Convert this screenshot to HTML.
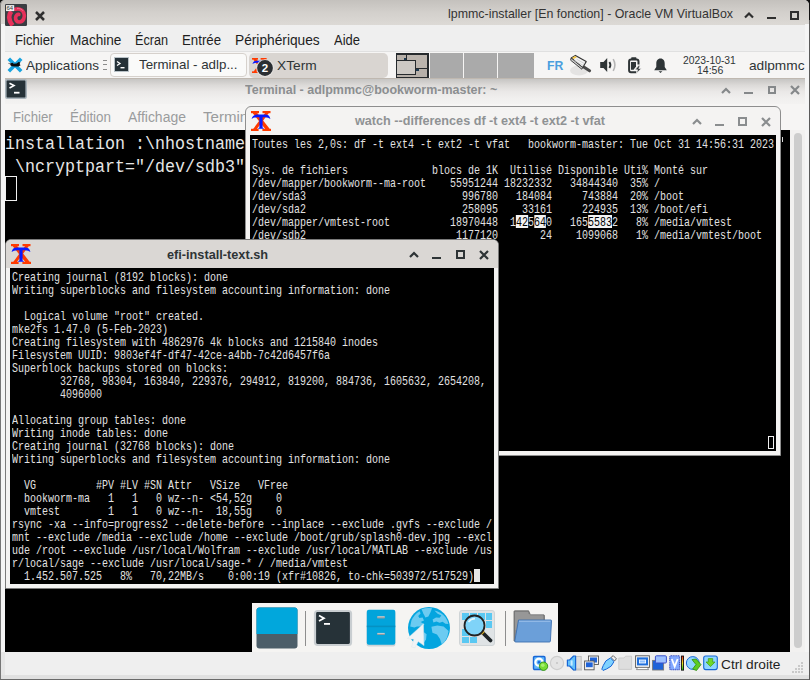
<!DOCTYPE html>
<html><head><meta charset="utf-8">
<style>
*{margin:0;padding:0;box-sizing:border-box}
html,body{width:810px;height:680px;overflow:hidden;background:#000}
body{position:relative;font-family:"Liberation Sans",sans-serif}
.a{position:absolute}
.t{position:absolute;white-space:pre;line-height:1}
.xt{position:absolute;white-space:pre;font-family:"Liberation Mono",monospace;font-size:13px;line-height:13px;color:#e2e2e2;transform-origin:0 0}
.inv{background:#f2f2f2;color:#000;display:inline-block;height:13px;line-height:13px;vertical-align:top;position:relative;top:-1px;padding-top:1px}
svg{position:absolute;overflow:visible}
</style></head><body>
<div class="a" style="left:0px;top:0px;width:810px;height:680px;background:#111"></div>
<div class="a" style="left:0px;top:679px;width:810px;height:1px;background:#6a6a6a"></div>
<div class="a" style="left:809px;top:20px;width:1px;height:660px;background:#5a5a5a"></div>
<div class="a" style="left:0px;top:0px;width:809px;height:679px;background:#efefef;border-radius:5px 5px 0 0;"></div>
<div class="a" style="left:0px;top:0px;width:809px;height:25px;background:linear-gradient(#c4c1bd,#d3d0cc 50%,#dcd9d5);border-radius:5px 5px 0 0;border-left:1px solid #858380"></div>
<div class="a" style="left:0px;top:24px;width:1px;height:655px;background:#767676"></div>
<div class="a" style="left:1px;top:24px;width:4px;height:628px;background:#f5f5f5"></div>
<div class="a" style="left:805px;top:24px;width:4px;height:628px;background:#f5f5f5"></div>
<div class="a" style="left:5px;top:25px;width:800px;height:27px;background:#efefef;border-bottom:1px solid #e0e0e0"></div>
<div class="a" style="left:1px;top:675px;width:808px;height:4px;background:#e0e0e0"></div>
<div class="a" style="left:1px;top:652px;width:4px;height:23px;background:#e6e6e6"></div>
<svg style="left:5px;top:4px;overflow:hidden;" width="22" height="22" viewBox="0 0 22 22">
      <rect x="0" y="0" width="22" height="22" rx="1.2" fill="#3a3d42"/>
      <path d="M10.2 5.2 C13 4.4, 17.6 5, 19 9.5 C20.2 13, 18.5 17.6, 14.5 18 C11.8 18.2, 10.4 16, 10.6 13.6 C10.8 11.4, 12.4 10.2, 13.8 10.4" fill="none" stroke="#e6305a" stroke-width="3.7" stroke-linecap="round"/>
      <path d="M6.4 7.4 C3.4 10.6, 3.2 16.4, 7.6 21.4" fill="none" stroke="#e6305a" stroke-width="4.6" stroke-linecap="butt"/>
      <path d="M12 4.6 C14 4.2, 16.6 4.8, 18 6.8" fill="none" stroke="#f58aa2" stroke-width="1" opacity="0.7"/>
      <rect x="1" y="1.1" width="8.2" height="6" fill="#eeeeee"/>
      <text x="1.5" y="6.4" font-size="6" font-family="Liberation Sans" fill="#333">64</text>
    </svg>
<svg style="left:35px;top:11px;" width="10" height="10" viewBox="0 0 10 10"><path d="M1 1L9 9M9 1L1 9" stroke="#2f2f2f" stroke-width="2.5"/></svg>
<div class="t" style="left:448px;top:6.57px;font-size:13.5px;color:#333;font-weight:normal;font-family:'Liberation Sans',sans-serif;transform:scaleX(0.9183);transform-origin:0 0;">lpmmc-installer [En fonction] - Oracle VM VirtualBox</div>
<svg style="left:744px;top:11px;" width="10" height="8" viewBox="0 0 10 8"><path d="M1 6.5L5 2.5L9 6.5" fill="none" stroke="#2f2f2f" stroke-width="2.2"/></svg>
<div class="a" style="left:767px;top:17px;width:9px;height:2px;background:#2f2f2f"></div>
<div class="a" style="left:790px;top:11px;width:9px;height:9px;border:2px solid #2f2f2f"></div>
<div class="t" style="left:15.3px;top:33.15px;font-size:14px;color:#1e1e1e;font-weight:normal;font-family:'Liberation Sans',sans-serif;transform:scaleX(0.9403);transform-origin:0 0;">Fichier</div>
<div class="t" style="left:69.6px;top:33.15px;font-size:14px;color:#1e1e1e;font-weight:normal;font-family:'Liberation Sans',sans-serif;transform:scaleX(0.9713);transform-origin:0 0;">Machine</div>
<div class="t" style="left:135.3px;top:33.15px;font-size:14px;color:#1e1e1e;font-weight:normal;font-family:'Liberation Sans',sans-serif;transform:scaleX(0.9050);transform-origin:0 0;">Écran</div>
<div class="t" style="left:182.3px;top:33.15px;font-size:14px;color:#1e1e1e;font-weight:normal;font-family:'Liberation Sans',sans-serif;transform:scaleX(0.9479);transform-origin:0 0;">Entrée</div>
<div class="t" style="left:235.4px;top:33.15px;font-size:14px;color:#1e1e1e;font-weight:normal;font-family:'Liberation Sans',sans-serif;transform:scaleX(0.9804);transform-origin:0 0;">Périphériques</div>
<div class="t" style="left:334.2px;top:33.15px;font-size:14px;color:#1e1e1e;font-weight:normal;font-family:'Liberation Sans',sans-serif;transform:scaleX(0.9243);transform-origin:0 0;">Aide</div>
<div class="a" style="left:5px;top:52px;width:800px;height:600px;background:#000"></div>
<div class="a" style="left:5px;top:52px;width:800px;height:27px;background:#f6f5f4;border-bottom:1px solid #bfb8b0"></div>
<svg style="left:7px;top:57px;" width="16" height="16" viewBox="0 0 16 16">
      <path d="M1.8 1.8L14.2 14.2M14.2 1.8L1.8 14.2" stroke="#19a3de" stroke-width="3.6"/>
      <path d="M3 6.6 L5.6 5.8 L6.6 6.8 L9.6 6.6 L11.6 5 L13.4 5.6 L12.6 7 L13.6 8.2 L11.4 9.4 L7.6 9.6 L5 9.2 L3.6 8.6 Z" fill="#0b0b0b"/>
      <path d="M1.4 6.4 L3.2 6.8" stroke="#555" stroke-width="0.8"/>
    </svg>
<div class="t" style="left:25.5px;top:58.50px;font-size:13px;color:#2e3436;font-weight:normal;font-family:'Liberation Sans',sans-serif;transform:scaleX(1.0414);transform-origin:0 0;">Applications</div>
<div class="a" style="left:103px;top:59.5px;width:4px;height:1px;background:#8c8c8c"></div>
<div class="a" style="left:103px;top:64px;width:4px;height:1px;background:#8c8c8c"></div>
<div class="a" style="left:103px;top:68.5px;width:4px;height:1px;background:#8c8c8c"></div>
<div class="a" style="left:110px;top:53px;width:137px;height:24px;background:#fafaf9;border:1px solid #d6d1cc;border-radius:4px"></div>
<svg style="left:114px;top:57px;" width="15" height="15" viewBox="0 0 15 15">
      <rect x="0.5" y="0.5" width="14" height="14" fill="#263238" stroke="#b9c2c7"/>
      <path d="M3 4.5L6 6.5L3 8.5" fill="none" stroke="#fff" stroke-width="1.3"/>
      <rect x="6.5" y="10" width="4" height="1.4" fill="#fff"/>
    </svg>
<div class="t" style="left:138.5px;top:58.30px;font-size:13px;color:#2e3436;font-weight:normal;font-family:'Liberation Sans',sans-serif;transform:scaleX(1.0250);transform-origin:0 0;">Terminal - adlp...</div>
<div class="a" style="left:248.5px;top:52.5px;width:139px;height:25px;background:#d9d5d1;border-radius:5px"></div>
<svg style="left:252px;top:57.5px;" width="15" height="15" viewBox="0 0 15 15"><g transform="scale(0.75)">
      <path d="M3.2 1.2 L17.2 18.8" stroke="#ff3a00" stroke-width="3.6"/>
      <path d="M16.6 1.2 L3.4 18.8" stroke="#ff3a00" stroke-width="3"/>
      <rect x="0" y="0" width="8" height="2.2" fill="#ff3a00"/><rect x="11.5" y="0" width="8" height="2.2" fill="#ff3a00"/>
      <rect x="0" y="17.8" width="7.6" height="2.2" fill="#ff3a00"/><rect x="11.4" y="17.8" width="8.6" height="2.2" fill="#ff3a00"/>
      <path d="M0.6 8 Q1.6 3.6 5.6 3.6 H14.4 Q18.4 3.6 19.4 8 Q17.6 6.2 13.6 6.2 H11.6 V16.6 L13.2 17.8 H6.8 L8.4 16.6 V6.2 H6.4 Q2.4 6.2 0.6 8Z" fill="#0a1aff"/>
    </g></svg>
<svg style="left:256px;top:59px;" width="18" height="18" viewBox="0 0 18 18"><circle cx="9" cy="9" r="8.8" fill="#e8e6e3"/><circle cx="9" cy="9" r="7.9" fill="#2b2f33"/><text x="9" y="13.2" font-size="11.5" font-weight="bold" text-anchor="middle" font-family="Liberation Sans" fill="#fff">2</text></svg>
<div class="t" style="left:276.7px;top:58.75px;font-size:13px;color:#2e3436;font-weight:normal;font-family:'Liberation Sans',sans-serif;transform:scaleX(1.0570);transform-origin:0 0;">XTerm</div>
<div class="a" style="left:396px;top:52.5px;width:33px;height:25.5px;background:#b7b0a9;border:1.5px solid #262a2d;border-right-width:2px;border-top-width:2px"></div>
<div class="a" style="left:406px;top:54px;width:22px;height:14.6px;background:#bbb4ad;border:1.2px solid #262a2d"></div>
<div class="a" style="left:396px;top:60.2px;width:20px;height:14.4px;background:#cdc9c4;border:1.3px solid #262a2d"></div>
<div class="a" style="left:404px;top:58px;width:2px;height:2px;background:#1d3a52"></div>
<div class="a" style="left:416px;top:68.5px;width:2.5px;height:2.5px;background:#1d3a52"></div>
<div class="a" style="left:430px;top:52.5px;width:33px;height:25.5px;background:#aaaaaa"></div>
<div class="a" style="left:464px;top:52.5px;width:33px;height:25.5px;background:#aaaaaa"></div>
<div class="a" style="left:498px;top:52.5px;width:35.5px;height:25.5px;background:#aaaaaa"></div>
<div class="t" style="left:547px;top:59.30px;font-size:13px;color:#4a9ede;font-weight:bold;font-family:'Liberation Sans',sans-serif;transform:scaleX(0.9406);transform-origin:0 0;">FR</div>
<svg style="left:568px;top:54px;" width="25" height="24" viewBox="0 0 25 24">
      <ellipse cx="11" cy="16.5" rx="9" ry="5" fill="#000" opacity="0.07"/>
      <path d="M14.6 12.2 L21.6 16.8" stroke="#4a4a4a" stroke-width="3" stroke-linecap="round"/>
      <path d="M3.2 4 L7.4 1.4 L18.2 7.6 L14.6 13.6 Z" fill="#f2f2f2" stroke="#333" stroke-width="1.1" stroke-linejoin="round"/>
      <path d="M3.2 4 L14.6 13.6 L13.8 15.2 L2.6 6.2Z" fill="#d0d0d0" stroke="#333" stroke-width="0.9" stroke-linejoin="round"/>
      <path d="M4.2 3.6 L7.2 1.9 L8.8 3.2 L5.6 5Z" fill="#f4c542"/>
      <path d="M6.6 6.6 L15.4 11.6 M8.6 5.2 L16.4 9.6" stroke="#cdcdcd" stroke-width="0.8"/>
    </svg>
<svg style="left:599px;top:57px;" width="18" height="16" viewBox="0 0 18 16">
      <path d="M1.2 5H4.5L8.2 1V15L4.5 11H1.2Z" fill="#2e3436"/>
      <path d="M10.4 5 Q12.4 8 10.4 11" fill="none" stroke="#2e3436" stroke-width="1.9"/>
      <path d="M14.2 2.2 Q17.6 8 14.2 13.8" fill="none" stroke="#b5b5b5" stroke-width="1.6"/>
    </svg>
<svg style="left:628px;top:56.5px;" width="15" height="17" viewBox="0 0 15 17">
      <rect x="3.2" y="0.3" width="5.2" height="2.2" rx="0.6" fill="#2e3436"/>
      <path d="M8.5 15.2 H3 Q1.1 15.2 1.1 13.3 V4.4 Q1.1 2.5 3 2.5 H8.6 Q10.5 2.5 10.5 4.4 V7.5" fill="none" stroke="#2e3436" stroke-width="2"/>
      <path d="M3 5 H8 V9.5 L5.6 12.8 H3Z" fill="#2e3436"/>
      <path d="M10.6 8.6 L7 12.8 H9.6 L8.4 16.2 L13.4 11.6 H10.8 L12.2 8.6Z" fill="#2e3436" stroke="#f6f5f4" stroke-width="0.7"/>
    </svg>
<svg style="left:653.5px;top:57.5px;" width="13" height="16" viewBox="0 0 13 16">
      <path d="M6.5 0.4 C3.6 0.4 2.3 2.8 2.3 5.4 V9 L0.2 12.2 H12.8 L10.7 9 V5.4 C10.7 2.8 9.4 0.4 6.5 0.4Z" fill="#2e3436"/>
      <path d="M4.6 13.2 H8.4 L6.5 15Z" fill="#2e3436"/>
    </svg>
<div class="t" style="left:683.1px;top:54.57px;font-size:11.5px;color:#2e3436;font-weight:normal;font-family:'Liberation Sans',sans-serif;transform:scaleX(0.8975);transform-origin:0 0;">2023-10-31</div>
<div class="t" style="left:696.7px;top:65.27px;font-size:11.5px;color:#2e3436;font-weight:normal;font-family:'Liberation Sans',sans-serif;transform:scaleX(0.9139);transform-origin:0 0;">14:56</div>
<div class="t" style="left:748.5px;top:58.57px;font-size:13.5px;color:#2e3436;font-weight:normal;font-family:'Liberation Sans',sans-serif;transform:scaleX(1.0134);transform-origin:0 0;">adlpmmc</div>
<div class="a" style="left:5px;top:79px;width:800px;height:25px;background:linear-gradient(#c6c5c3,#dcdad8 25%,#eae8e7 50%,#f1f0ef 80%,#f3f2f1)"></div>
<div class="a" style="left:5px;top:104px;width:800px;height:26px;background:#f6f5f4"></div>
<svg style="left:5px;top:79px;" width="22" height="20" viewBox="0 0 22 20">
      <rect x="0.8" y="0.8" width="20.4" height="18.4" rx="1.5" fill="#263238" stroke="#a9b4bb" stroke-width="1.6"/>
      <path d="M4.5 4.2L9 6.6L4.5 9" fill="none" stroke="#fff" stroke-width="1.6"/>
      <rect x="9" y="12.8" width="5.5" height="1.8" fill="#fff"/>
    </svg>
<div class="t" style="left:245.2px;top:83.00px;font-size:13px;color:#8b8e90;font-weight:bold;font-family:'Liberation Sans',sans-serif;transform:scaleX(0.9602);transform-origin:0 0;">Terminal - adlpmmc@bookworm-master: ~</div>
<svg style="left:720.5px;top:86.5px;" width="10" height="7" viewBox="0 0 10 7"><path d="M1 6L5 2L9 6" fill="none" stroke="#85888a" stroke-width="2.2"/></svg>
<div class="a" style="left:744px;top:92px;width:9px;height:2px;background:#85888a"></div>
<div class="a" style="left:768px;top:86px;width:7.5px;height:7.5px;border:2px solid #85888a"></div>
<svg style="left:790px;top:85px;" width="10" height="10" viewBox="0 0 10 10"><path d="M1 1L9 9M9 1L1 9" stroke="#85888a" stroke-width="2.2"/></svg>
<div class="t" style="left:13.3px;top:110.15px;font-size:14px;color:#9a9c9d;font-weight:normal;font-family:'Liberation Sans',sans-serif;transform:scaleX(0.9450);transform-origin:0 0;">Fichier</div>
<div class="t" style="left:70.4px;top:110.15px;font-size:14px;color:#9a9c9d;font-weight:normal;font-family:'Liberation Sans',sans-serif;transform:scaleX(0.9578);transform-origin:0 0;">Édition</div>
<div class="t" style="left:128.1px;top:110.15px;font-size:14px;color:#9a9c9d;font-weight:normal;font-family:'Liberation Sans',sans-serif;transform:scaleX(0.9962);transform-origin:0 0;">Affichage</div>
<div class="t" style="left:203px;top:110.15px;font-size:14px;color:#9a9c9d;font-weight:normal;font-family:'Liberation Sans',sans-serif;transform:scaleX(1.0774);transform-origin:0 0;">Terminal</div>
<div class="a" style="left:5px;top:130px;width:785px;height:522px;background:#000"></div>
<div class="a" style="left:790px;top:130px;width:15px;height:522px;background:#f2f1f0"></div>
<div class="a" style="left:794px;top:133px;width:8px;height:515px;background:#cdcdcd;border-radius:4px"></div>
<div class="t" style="left:5px;top:135.59px;font-size:17.5px;color:#e6e6e6;font-weight:normal;font-family:'Liberation Mono',monospace;transform:scaleX(0.9523);transform-origin:0 0;">installation :\nhostname=&quot;lpmmc&quot; \ndomain=&quot;&quot; \ndiskpart=&quot;/dev/sda&quot; \nvgname=&quot;</div>
<div class="t" style="left:5px;top:158.59px;font-size:17.5px;color:#e6e6e6;font-weight:normal;font-family:'Liberation Mono',monospace;transform:scaleX(0.9523);transform-origin:0 0;"> \ncryptpart=&quot;/dev/sdb3&quot;</div>
<div class="a" style="left:5px;top:176px;width:12px;height:25px;border:1.5px solid #f0f0f0"></div>
<div class="a" style="left:245px;top:106px;width:536px;height:350px;background:#f4f3f2;border:1px solid #8e8e8e;border-radius:6px 6px 0 0"></div>
<div class="a" style="left:250px;top:135px;width:526px;height:316px;background:#000"></div>
<svg style="left:251px;top:111px;" width="20" height="20" viewBox="0 0 20 20"><g transform="scale(1.0)">
      <path d="M3.2 1.2 L17.2 18.8" stroke="#ff3a00" stroke-width="3.6"/>
      <path d="M16.6 1.2 L3.4 18.8" stroke="#ff3a00" stroke-width="3"/>
      <rect x="0" y="0" width="8" height="2.2" fill="#ff3a00"/><rect x="11.5" y="0" width="8" height="2.2" fill="#ff3a00"/>
      <rect x="0" y="17.8" width="7.6" height="2.2" fill="#ff3a00"/><rect x="11.4" y="17.8" width="8.6" height="2.2" fill="#ff3a00"/>
      <path d="M0.6 8 Q1.6 3.6 5.6 3.6 H14.4 Q18.4 3.6 19.4 8 Q17.6 6.2 13.6 6.2 H11.6 V16.6 L13.2 17.8 H6.8 L8.4 16.6 V6.2 H6.4 Q2.4 6.2 0.6 8Z" fill="#0a1aff"/>
    </g></svg>
<div class="t" style="left:354.5px;top:113.50px;font-size:13px;color:#8f9294;font-weight:bold;font-family:'Liberation Sans',sans-serif;transform:scaleX(0.9721);transform-origin:0 0;">watch --differences df -t ext4 -t ext2 -t vfat</div>
<svg style="left:691.5px;top:118px;" width="10" height="7" viewBox="0 0 10 7"><path d="M1 6L5 2L9 6" fill="none" stroke="#8a8d8f" stroke-width="2.2"/></svg>
<div class="a" style="left:715px;top:124px;width:9px;height:2px;background:#8a8d8f"></div>
<div class="a" style="left:738px;top:117px;width:9px;height:9px;border:2px solid #8a8d8f"></div>
<svg style="left:761px;top:117px;" width="10" height="10" viewBox="0 0 10 10"><path d="M1 1L9 9M9 1L1 9" stroke="#8a8d8f" stroke-width="2.2"/></svg>
<div class="xt" style="left:252px;top:138px;transform:scaleX(0.76923)">Toutes les 2,0s: df -t ext4 -t ext2 -t vfat   bookworm-master: Tue Oct 31 14:56:31 2023</div>
<div class="xt" style="left:252px;top:164px;transform:scaleX(0.76923)">Sys. de fichiers              blocs de 1K  Utilisé Disponible Uti% Monté sur</div>
<div class="xt" style="left:252px;top:177px;transform:scaleX(0.76923)">/dev/mapper/bookworm--ma-root    55951244 18232332   34844340  35% /</div>
<div class="xt" style="left:252px;top:190px;transform:scaleX(0.76923)">/dev/sda3                          996780   184084     743884  20% /boot</div>
<div class="xt" style="left:252px;top:203px;transform:scaleX(0.76923)">/dev/sda2                          258095    33161     224935  13% /boot/efi</div>
<div class="xt" style="left:252px;top:216px;transform:scaleX(0.76923)">/dev/mapper/vmtest-root          18970448  1<span class="inv">42</span>5<span class="inv">64</span>0   165<span class="inv">5583</span>2   8% /media/vmtest</div>
<div class="xt" style="left:252px;top:229px;transform:scaleX(0.76923)">/dev/sdb2                         1177120       24    1099068   1% /media/vmtest/boot</div>
<div class="a" style="left:768px;top:436px;width:6px;height:13px;border:1px solid #f0f0f0"></div>
<div class="a" style="left:782px;top:137px;width:1.2px;height:5px;background:#d8d8d8"></div>
<div class="a" style="left:5px;top:239px;width:494px;height:350px;background:#f4f3f2;border:1px solid #7a7a7a;border-radius:6px 6px 0 0"></div>
<div class="a" style="left:6px;top:240px;width:492px;height:28px;background:#dad7d4;border-radius:5px 5px 0 0"></div>
<div class="a" style="left:10px;top:268px;width:484px;height:316px;background:#000"></div>
<svg style="left:11px;top:244px;" width="20" height="20" viewBox="0 0 20 20"><g transform="scale(1.0)">
      <path d="M3.2 1.2 L17.2 18.8" stroke="#ff3a00" stroke-width="3.6"/>
      <path d="M16.6 1.2 L3.4 18.8" stroke="#ff3a00" stroke-width="3"/>
      <rect x="0" y="0" width="8" height="2.2" fill="#ff3a00"/><rect x="11.5" y="0" width="8" height="2.2" fill="#ff3a00"/>
      <rect x="0" y="17.8" width="7.6" height="2.2" fill="#ff3a00"/><rect x="11.4" y="17.8" width="8.6" height="2.2" fill="#ff3a00"/>
      <path d="M0.6 8 Q1.6 3.6 5.6 3.6 H14.4 Q18.4 3.6 19.4 8 Q17.6 6.2 13.6 6.2 H11.6 V16.6 L13.2 17.8 H6.8 L8.4 16.6 V6.2 H6.4 Q2.4 6.2 0.6 8Z" fill="#0a1aff"/>
    </g></svg>
<div class="t" style="left:167px;top:247.50px;font-size:13px;color:#2e3436;font-weight:bold;font-family:'Liberation Sans',sans-serif;transform:scaleX(0.9777);transform-origin:0 0;">efi-install-text.sh</div>
<svg style="left:409px;top:251px;" width="10" height="7" viewBox="0 0 10 7"><path d="M1 6L5 2L9 6" fill="none" stroke="#2e3436" stroke-width="2.2"/></svg>
<div class="a" style="left:432px;top:257px;width:9px;height:2px;background:#2e3436"></div>
<div class="a" style="left:456px;top:250px;width:9px;height:9px;border:2px solid #2e3436"></div>
<svg style="left:479px;top:250px;" width="10" height="10" viewBox="0 0 10 10"><path d="M1 1L9 9M9 1L1 9" stroke="#2e3436" stroke-width="2.2"/></svg>
<div class="xt" style="left:12px;top:271px;transform:scaleX(0.76923)">Creating journal (8192 blocks): done</div>
<div class="xt" style="left:12px;top:284px;transform:scaleX(0.76923)">Writing superblocks and filesystem accounting information: done</div>
<div class="xt" style="left:12px;top:310px;transform:scaleX(0.76923)">  Logical volume &quot;root&quot; created.</div>
<div class="xt" style="left:12px;top:323px;transform:scaleX(0.76923)">mke2fs 1.47.0 (5-Feb-2023)</div>
<div class="xt" style="left:12px;top:336px;transform:scaleX(0.76923)">Creating filesystem with 4862976 4k blocks and 1215840 inodes</div>
<div class="xt" style="left:12px;top:349px;transform:scaleX(0.76923)">Filesystem UUID: 9803ef4f-df47-42ce-a4bb-7c42d6457f6a</div>
<div class="xt" style="left:12px;top:362px;transform:scaleX(0.76923)">Superblock backups stored on blocks: </div>
<div class="xt" style="left:12px;top:375px;transform:scaleX(0.76923)">        32768, 98304, 163840, 229376, 294912, 819200, 884736, 1605632, 2654208, </div>
<div class="xt" style="left:12px;top:388px;transform:scaleX(0.76923)">        4096000</div>
<div class="xt" style="left:12px;top:414px;transform:scaleX(0.76923)">Allocating group tables: done</div>
<div class="xt" style="left:12px;top:427px;transform:scaleX(0.76923)">Writing inode tables: done</div>
<div class="xt" style="left:12px;top:440px;transform:scaleX(0.76923)">Creating journal (32768 blocks): done</div>
<div class="xt" style="left:12px;top:453px;transform:scaleX(0.76923)">Writing superblocks and filesystem accounting information: done</div>
<div class="xt" style="left:12px;top:479px;transform:scaleX(0.76923)">  VG          #PV #LV #SN Attr   VSize   VFree</div>
<div class="xt" style="left:12px;top:492px;transform:scaleX(0.76923)">  bookworm-ma   1   1   0 wz--n- &lt;54,52g    0 </div>
<div class="xt" style="left:12px;top:505px;transform:scaleX(0.76923)">  vmtest        1   1   0 wz--n-  18,55g    0 </div>
<div class="xt" style="left:12px;top:518px;transform:scaleX(0.76923)">rsync -xa --info=progress2 --delete-before --inplace --exclude .gvfs --exclude /</div>
<div class="xt" style="left:12px;top:531px;transform:scaleX(0.76923)">mnt --exclude /media --exclude /home --exclude /boot/grub/splash0-dev.jpg --excl</div>
<div class="xt" style="left:12px;top:544px;transform:scaleX(0.76923)">ude /root --exclude /usr/local/Wolfram --exclude /usr/local/MATLAB --exclude /us</div>
<div class="xt" style="left:12px;top:557px;transform:scaleX(0.76923)">r/local/sage --exclude /usr/local/sage-* / /media/vmtest</div>
<div class="xt" style="left:12px;top:570px;transform:scaleX(0.76923)">  1.452.507.525   8%   70,22MB/s    0:00:19 (xfr#10826, to-chk=503972/517529)</div>
<div class="a" style="left:474px;top:569px;width:6px;height:13px;background:#e6e6e6"></div>
<div class="a" style="left:252px;top:603px;width:306px;height:49px;background:#f5f4f2"></div>
<svg style="left:256px;top:607px;" width="42" height="42" viewBox="0 0 42 42">
      <rect x="0.5" y="0.5" width="41" height="41" rx="3" fill="#4c5e69"/>
      <path d="M0.5 3.5A3 3 0 0 1 3.5 0.5H38.5A3 3 0 0 1 41.5 3.5V27H0.5Z" fill="#01a7dc"/>
    </svg>
<div class="a" style="left:304.5px;top:611px;width:1.5px;height:35px;background:#8e8e8e"></div>
<svg style="left:314px;top:610px;" width="38" height="36" viewBox="0 0 38 36">
      <rect x="1" y="1" width="36" height="34" rx="2.5" fill="#263238" stroke="#c9ced1" stroke-width="2.2"/>
      <path d="M5 5.5L10 8.2L5 11" fill="none" stroke="#fff" stroke-width="1.7"/>
      <rect x="10" y="13" width="6" height="1.8" fill="#fff"/>
    </svg>
<svg style="left:366px;top:609px;" width="30" height="39" viewBox="0 0 30 39">
      <rect x="0.6" y="2" width="28.8" height="35.6" rx="2" fill="#cfd4d7"/>
      <rect x="0.8" y="0.8" width="28.5" height="35" rx="2" fill="#02a4db"/>
      <rect x="0.8" y="16.6" width="28.5" height="1.6" fill="#0591c2"/>
      <rect x="11" y="7.3" width="8" height="2.2" rx="0.8" fill="#8d9aa0"/><rect x="11.4" y="7.3" width="7.2" height="1" fill="#c7cfd3"/>
      <rect x="11" y="23.9" width="8" height="2.2" rx="0.8" fill="#8d9aa0"/><rect x="11.4" y="23.9" width="7.2" height="1" fill="#c7cfd3"/>
    </svg>
<svg style="left:408px;top:607px;" width="42" height="42" viewBox="0 0 42 42">
      <circle cx="21" cy="21" r="21" fill="#04a5df"/>
      <g fill="#6ccbf1">
      <path d="M13.5 2.2 Q18 0.6 24 1.2 L22.6 5 L20.4 9.4 L17.4 10.6 L15.2 6.2Z"/>
      <path d="M3.4 13.6 Q6 7.4 11.6 4.2 L12.6 6.6 L10.2 9 L11.4 11 L14.6 10.6 L16 13.4 L12.6 15 L16.6 17.2 L13.6 19.4 L9 19.6 L6.4 20.4 L2.2 19.4Z"/>
      <path d="M26.4 3.6 Q33.4 5.2 37.6 10.6 Q39.6 13.6 40.4 17 L37.4 16.8 L34.6 14.8 L31.6 15.8 L28.4 14.6 L25.4 15.6 L24.6 12.4 L28 10.6 L31.6 10.8 L33.4 8.4 L29.6 6.8Z"/>
      <path d="M23.4 19.8 L29.4 18.6 L35.6 19.6 L40.6 24 Q40 30 36.8 34.6 L33.8 37.6 L32 32 L29 27.4 L24.4 25.8Z"/>
      <path d="M15.6 25 L18.6 27.2 L18 32.6 L16 35.6 L15.2 30Z"/>
      </g>
      <path d="M15.4 16.9 L-0.7 31.6 L5.8 32.2 L3.5 40 L7 40.8 L10.2 34.5 L16 38.6Z" fill="#f1f3f5" stroke="#dfe6ea" stroke-width="0.5"/>
    </svg>
<svg style="left:459px;top:610px;" width="36" height="36" viewBox="0 0 36 36">
      <rect x="0.5" y="0.5" width="35" height="35" rx="2.5" fill="#dfe3e5" stroke="#cfd4d6"/>
      <g fill="#5ac8f2">
        <rect x="3" y="3" width="7" height="7"/><rect x="11" y="3" width="7" height="7"/><rect x="19" y="3" width="7" height="7"/><rect x="27" y="3" width="6" height="7"/>
        <rect x="27" y="11" width="6" height="7"/><rect x="3" y="19" width="7" height="7"/><rect x="3" y="27" width="7" height="6"/><rect x="11" y="27" width="7" height="6"/>
      </g>
      <path d="M23 22 L31.5 30.5" stroke="#1d2326" stroke-width="3.8" stroke-linecap="round"/>
      <path d="M22.6 21.6 L24.4 23.4" stroke="#e0b020" stroke-width="3.8"/>
      <circle cx="15.5" cy="15.5" r="10" fill="#7fd3f8" stroke="#222" stroke-width="1.8"/>
      <path d="M9.5 12 Q12 8.5 16 8.6" fill="none" stroke="#e3f6fd" stroke-width="1.6"/>
    </svg>
<div class="a" style="left:504.5px;top:611px;width:1.5px;height:35px;background:#8e8e8e"></div>
<svg style="left:513px;top:609px;" width="39" height="35" viewBox="0 0 39 35">
      <path d="M1 2.6 Q1 1.8 1.8 1.8 H15.6 L17.4 5.8 H30.6 Q31.4 5.8 31.4 6.6 V32 H1Z" fill="#8a8a8a" stroke="#555" stroke-width="0.7"/>
      <g stroke="#b5b5b5" stroke-width="0.6"><path d="M2 4H15M2 6H30M2 8H30M2 10H30M2 12H30M2 14H30M2 16H30M2 18H30M2 20H30"/></g>
      <path d="M5.5 11 H37.8 Q38.6 11 38.5 12 L37.4 32 Q37.3 33 36.4 33 H2.8 Q1.6 33 1.8 32 Z" fill="#6b9fd9" stroke="#3d6fb0" stroke-width="0.9"/>
      <path d="M6 12.2 H37.4" stroke="#a8c8ee" stroke-width="0.9"/>
    </svg>
<svg style="left:532px;top:655px;" width="16" height="16" viewBox="0 0 16 16">
      <rect x="1.5" y="1.5" width="11.5" height="13" rx="1.2" fill="#62b8fb" stroke="#1766d6" stroke-width="1.4"/>
      <circle cx="7" cy="7.2" r="3.6" fill="none" stroke="#fff" stroke-width="2.2"/>
      <circle cx="7" cy="7.2" r="1.2" fill="#1766d6"/>
      <circle cx="11.5" cy="11.2" r="4.2" fill="#78dd36" stroke="#2f8f12" stroke-width="0.9"/>
      <circle cx="10.8" cy="10.2" r="1.8" fill="#a8f070"/>
    </svg>
<svg style="left:549px;top:655px;" width="16" height="16" viewBox="0 0 16 16"><circle cx="8" cy="8" r="6.6" fill="#e4e4e4" stroke="#cdcdcd" stroke-width="1.2"/><circle cx="8" cy="8" r="1" fill="#c4c4c4"/></svg>
<svg style="left:566px;top:655px;" width="16" height="16" viewBox="0 0 16 16">
      <rect x="8.4" y="1.4" width="6.8" height="12.6" fill="#dcdcdc" stroke="#bdbdbd" stroke-width="0.9"/>
      <rect x="7" y="14" width="9" height="1.6" fill="#c4c4c4"/>
      <path d="M1.4 5 H3.6 L7.6 1 H9.6 V15 H7.6 L3.6 11 H1.4Z" fill="#62c0fa" stroke="#1766d6" stroke-width="1.2" stroke-linejoin="round"/>
      <rect x="4.6" y="5.4" width="2" height="5.2" fill="#c8ecff"/>
    </svg>
<svg style="left:584px;top:655px;" width="16" height="16" viewBox="0 0 16 16">
      <rect x="4.5" y="1" width="10" height="8.5" fill="#f2f2f2" stroke="#555" stroke-width="0.9"/>
      <rect x="6" y="2.5" width="7" height="5" fill="#1f63d8"/>
      <rect x="0.6" y="6" width="9.5" height="8.8" fill="#f2f2f2" stroke="#555" stroke-width="0.9"/>
      <rect x="2" y="7.4" width="6.7" height="4.8" fill="#1f63d8"/>
    </svg>
<svg style="left:601px;top:655px;" width="16" height="16" viewBox="0 0 16 16">
      <path d="M10 2.5 L12.2 0.6 L15.4 3.8 L13.5 6Z" fill="#f0f0f0" stroke="#555" stroke-width="0.9"/>
      <path d="M9.4 3 L13 6.6 Q11 12 5.5 14 L2 15.4 L0.8 14.2 L2.2 10.6 Q4 5 9.4 3Z" fill="#7fd2ff" stroke="#1766d6" stroke-width="1"/>
    </svg>
<svg style="left:618px;top:655px;" width="15" height="16" viewBox="0 0 15 16"><path d="M0.8 3 H6 L7.6 1.2 H13.6 V14.4 H0.8Z" fill="#dedede" stroke="#cacaca" stroke-width="0.9"/></svg>
<svg style="left:635px;top:655px;" width="15" height="16" viewBox="0 0 15 16">
      <rect x="0.6" y="0.8" width="13.8" height="11.6" fill="#f4f4f4" stroke="#555" stroke-width="0.9"/>
      <rect x="2" y="2.4" width="11" height="8" fill="#1f6fdc"/>
      <rect x="4.4" y="5" width="6.2" height="3" fill="#8fc0ff" stroke="#fff" stroke-width="0.8"/>
      <path d="M2.5 12.4 H12.5 L13.5 14.6 H1.5Z" fill="#fff" stroke="#666" stroke-width="0.7"/>
    </svg>
<svg style="left:652px;top:655px;" width="16" height="16" viewBox="0 0 16 16">
      <rect x="0.6" y="5.4" width="11" height="9.6" fill="#1f63d8" stroke="#777" stroke-width="0.9"/>
      <rect x="3.4" y="0.8" width="11" height="7.2" rx="1" fill="#9cc0ff" stroke="#3a4fc8" stroke-width="1"/>
    </svg>
<svg style="left:669px;top:655px;" width="16" height="16" viewBox="0 0 16 16">
      <rect x="0.8" y="0.8" width="9.8" height="14" rx="1" fill="#82a8ff" stroke="#3b4fbf" stroke-width="1.1" stroke-dasharray="1.2 0.6"/>
      <path d="M2.8 4 L5.7 11.6 L8.6 4" fill="none" stroke="#fff" stroke-width="1.8"/>
      <rect x="12" y="0.6" width="3" height="15" fill="#111"/>
      <rect x="12.9" y="1.5" width="1.2" height="13.2" fill="url(#lvl)"/>
      <defs><linearGradient id="lvl" x1="0" y1="0" x2="0" y2="1"><stop offset="0" stop-color="#e53020"/><stop offset="0.5" stop-color="#f2e020"/><stop offset="1" stop-color="#20c020"/></linearGradient></defs>
    </svg>
<svg style="left:686px;top:655px;" width="16" height="16" viewBox="0 0 16 16">
      <ellipse cx="6.8" cy="8" rx="6.4" ry="6.4" fill="#8fd6ff" stroke="#1766d6" stroke-width="1"/>
      <path d="M6 4.6 L10 4 L15 9.6 L10.5 15.5 L6.6 14 L10 9.6Z" fill="#5ccc22" stroke="#2e8a10" stroke-width="0.8"/>
    </svg>
<svg style="left:703px;top:655px;" width="15" height="16" viewBox="0 0 15 16">
      <rect x="0.7" y="1" width="13.6" height="13.6" rx="2" fill="#8fd6ff" stroke="#1766d6" stroke-width="1.1"/>
      <path d="M5.3 3.6 H9.7 V7 H12 L7.5 11.6 L3 7 H5.3Z" fill="#6fd82a" stroke="#3c9a12" stroke-width="0.7"/>
    </svg>
<div class="t" style="left:720.6px;top:658.07px;font-size:13.5px;color:#1e1e1e;font-weight:normal;font-family:'Liberation Sans',sans-serif;transform:scaleX(1.0151);transform-origin:0 0;">Ctrl droite</div>
<div class="a" style="left:801px;top:662px;width:2px;height:2px;background:#bdbdbd;border-radius:1px"></div>
<div class="a" style="left:798px;top:665px;width:2px;height:2px;background:#bdbdbd;border-radius:1px"></div>
<div class="a" style="left:801px;top:665px;width:2px;height:2px;background:#bdbdbd;border-radius:1px"></div>
<div class="a" style="left:795px;top:668px;width:2px;height:2px;background:#bdbdbd;border-radius:1px"></div>
<div class="a" style="left:798px;top:668px;width:2px;height:2px;background:#bdbdbd;border-radius:1px"></div>
<div class="a" style="left:801px;top:668px;width:2px;height:2px;background:#bdbdbd;border-radius:1px"></div>
<div class="a" style="left:792px;top:671px;width:2px;height:2px;background:#bdbdbd;border-radius:1px"></div>
<div class="a" style="left:795px;top:671px;width:2px;height:2px;background:#bdbdbd;border-radius:1px"></div>
<div class="a" style="left:798px;top:671px;width:2px;height:2px;background:#bdbdbd;border-radius:1px"></div>
<div class="a" style="left:801px;top:671px;width:2px;height:2px;background:#bdbdbd;border-radius:1px"></div>
</body></html>
